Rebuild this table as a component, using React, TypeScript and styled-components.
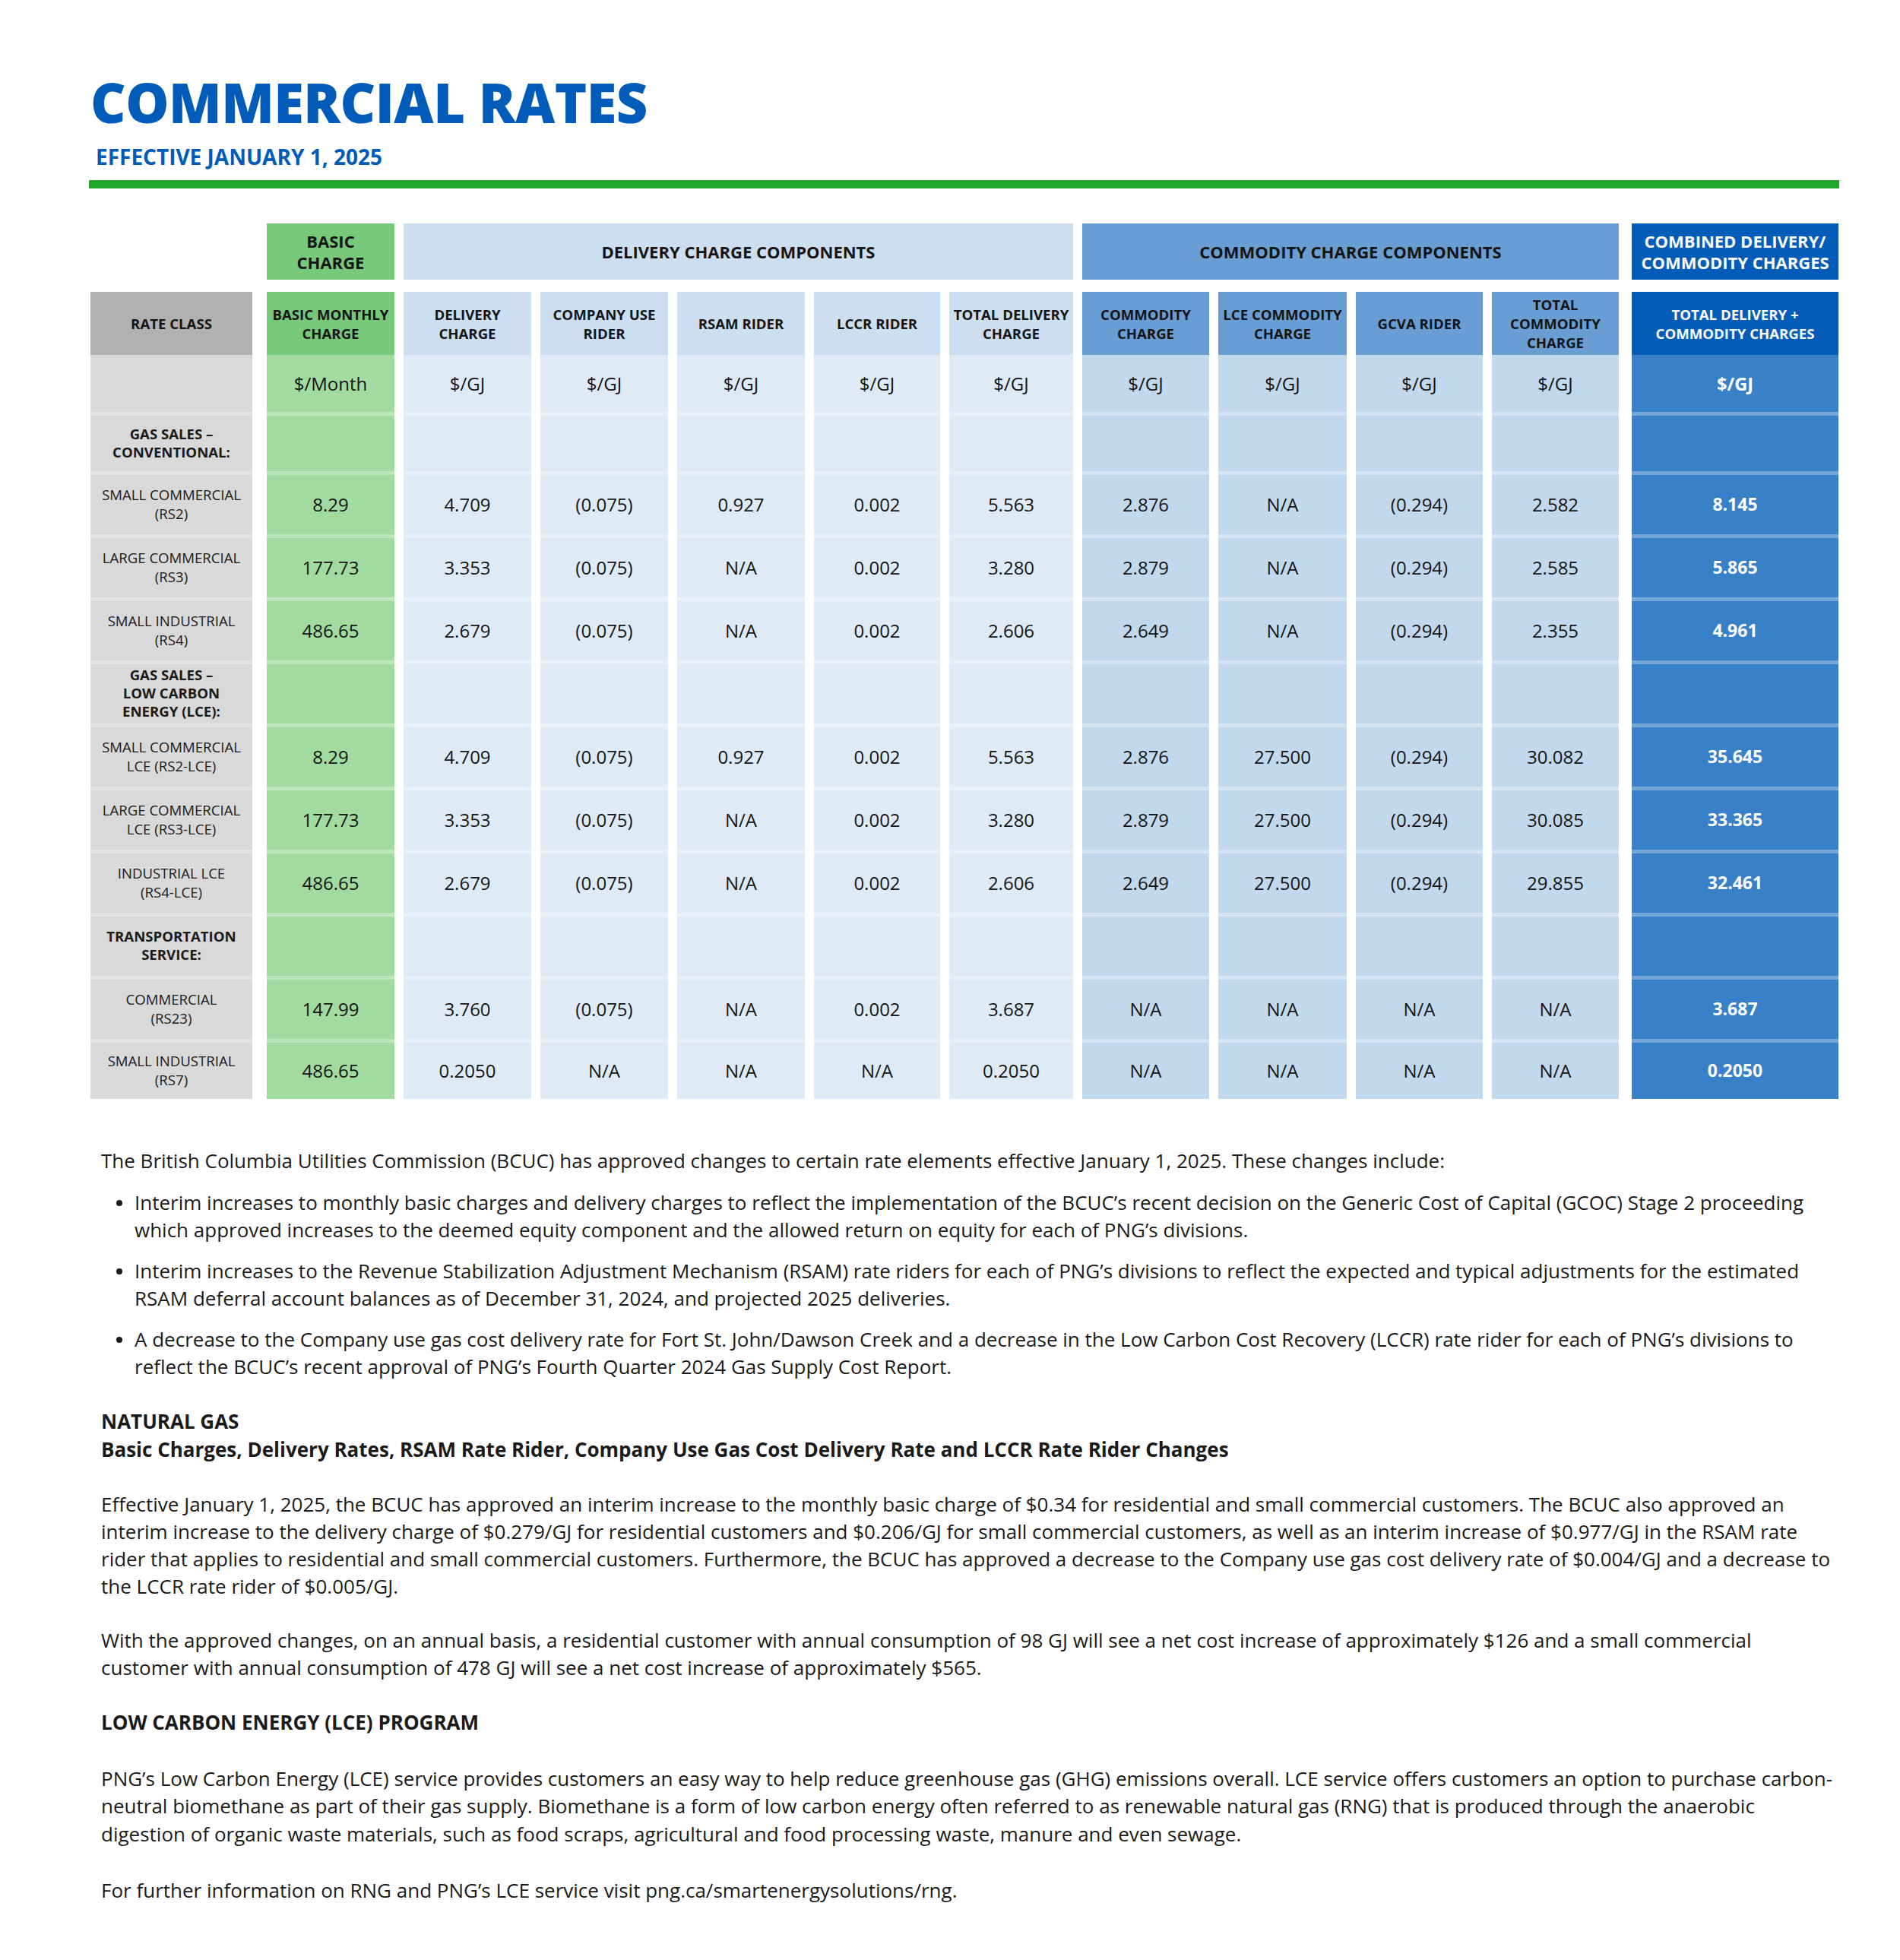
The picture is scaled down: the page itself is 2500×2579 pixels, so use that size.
import React from "react";
import styled, { createGlobalStyle, css } from "styled-components";

const GlobalStyle = createGlobalStyle`
  html, body { margin: 0; padding: 0; background: #ffffff; }
  body { font-family: "Open Sans", "Liberation Sans", Arial, sans-serif; color: #1a1a1a; }
  *, *::before, *::after { box-sizing: border-box; }
`;

type Tone = "gray" | "green" | "delivery" | "commodity" | "combined";

const palette: Record<Tone, { head: string; body: string; text: string }> = {
  gray: { head: "#b1b1b1", body: "#d9d9d9", text: "#141414" },
  green: { head: "#77c97a", body: "#a2db9f", text: "#141414" },
  delivery: { head: "#cbdff0", body: "#deebf7", text: "#141414" },
  commodity: { head: "#689ed3", body: "#c2d8ed", text: "#141414" },
  combined: { head: "#035db8", body: "#3880c8", text: "#ffffff" },
};

const COLUMNS =
  "220px 168px 168px 168px 168px 166px 163px 167px 169px 167px 167px 277px";

const Page = styled.div`
  width: 2500px;
  padding: 98px 80px 74px 117px;
`;

const Title = styled.h1`
  margin: 0;
  padding-left: 2px;
  font-size: 72px;
  line-height: 72px;
  font-weight: 800;
  color: #005cb8;
  letter-spacing: -0.5px;
`;

const Subtitle = styled.div`
  margin-top: 22px;
  padding-left: 9px;
  font-size: 28px;
  line-height: 28px;
  font-weight: 700;
  color: #005cb8;
`;

const Rule = styled.div`
  margin-top: 17px;
  height: 11px;
  background: #21a82a;
`;

const TableWrap = styled.div`
  margin-top: 46px;
  margin-left: 2px;
`;

const GroupRow = styled.div`
  display: grid;
  grid-template-columns: ${COLUMNS};
  column-gap: 12px;
  height: 74px;
`;

const GroupCell = styled.div<{ $tone: Tone; $span?: number }>`
  grid-column: span ${(p) => p.$span ?? 1};
  background: ${(p) => palette[p.$tone].head};
  color: ${(p) => palette[p.$tone].text};
  display: flex;
  align-items: center;
  justify-content: center;
  text-align: center;
  font-size: 22px;
  line-height: 28px;
  font-weight: 700;
  white-space: pre-line;
  ${(p) => p.$tone === "combined" && css`margin-left: 5px;`}
`;

const Blank = styled.div``;

const Grid = styled.div`
  margin-top: 16px;
  display: grid;
  grid-template-columns: ${COLUMNS};
  grid-template-rows: 83px 75px 78px repeat(9, 83px) 79px;
  column-gap: 12px;
`;

const toneEdges = (tone: Tone) => css`
  ${tone === "gray" && css`margin-right: 7px;`}
  ${tone === "combined" && css`margin-left: 5px;`}
`;

const HeadCell = styled.div<{ $tone: Tone }>`
  ${(p) => toneEdges(p.$tone)}
  background: ${(p) => palette[p.$tone].head};
  color: ${(p) => palette[p.$tone].text};
  display: flex;
  align-items: center;
  justify-content: center;
  text-align: center;
  font-size: 18.6px;
  line-height: 25px;
  font-weight: 700;
  white-space: pre-line;
  padding: 0 2px;
`;

const UnitCell = styled.div<{ $tone: Tone }>`
  ${(p) => toneEdges(p.$tone)}
  background: ${(p) => palette[p.$tone].body};
  color: ${(p) => palette[p.$tone].text};
  display: flex;
  align-items: center;
  justify-content: center;
  font-size: ${(p) => (p.$tone === "combined" ? "23.5px" : "24px")};
  font-weight: ${(p) => (p.$tone === "combined" ? 700 : 400)};
`;

const BodyCell = styled.div<{ $tone: Tone }>`
  ${(p) => toneEdges(p.$tone)}
  background: ${(p) => palette[p.$tone].body};
  color: ${(p) => palette[p.$tone].text};
  border-top: 5px solid rgba(255, 255, 255, 0.3);
  display: flex;
  align-items: center;
  justify-content: center;
  text-align: center;
  padding-bottom: 2px;
  font-size: ${(p) => (p.$tone === "combined" ? "23px" : "24px")};
  font-weight: ${(p) => (p.$tone === "combined" ? 700 : 400)};
`;

const RateLabel = styled.span<{ $section?: boolean }>`
  font-size: 18.6px;
  line-height: ${(p) => (p.$section ? "24px" : "25px")};
  font-weight: ${(p) => (p.$section ? 700 : 400)};
  white-space: pre-line;
  color: #1a1a1a;
`;

const Text = styled.div`
  margin-top: 63px;
  padding-left: 16px;
  font-size: 26px;
  line-height: 36.2px;
  color: #1a1a1a;
  white-space: nowrap;
`;

const Para = styled.p<{ $gap?: number }>`
  margin: ${(p) => p.$gap ?? 36}px 0 0;
`;

const Heading = styled.p<{ $gap?: number }>`
  margin: ${(p) => p.$gap ?? 36}px 0 0;
  font-weight: 700;
`;

const Bullets = styled.ul`
  list-style: none;
  margin: 19px 0 0;
  padding: 0;
`;

const Bullet = styled.li`
  position: relative;
  padding-left: 44px;
  & + & { margin-top: 17.5px; }
  &::before {
    content: "";
    position: absolute;
    left: 20px;
    top: 15px;
    width: 8px;
    height: 8px;
    border-radius: 50%;
    background: #1a1a1a;
  }
`;

const valueTones: Tone[] = [
  "green",
  "delivery",
  "delivery",
  "delivery",
  "delivery",
  "delivery",
  "commodity",
  "commodity",
  "commodity",
  "commodity",
  "combined",
];

const headers = [
  "BASIC MONTHLY\nCHARGE",
  "DELIVERY\nCHARGE",
  "COMPANY USE\nRIDER",
  "RSAM RIDER",
  "LCCR RIDER",
  "TOTAL DELIVERY\nCHARGE",
  "COMMODITY\nCHARGE",
  "LCE COMMODITY\nCHARGE",
  "GCVA RIDER",
  "TOTAL\nCOMMODITY\nCHARGE",
  "TOTAL DELIVERY +\nCOMMODITY CHARGES",
];

const units = ["$/Month", "$/GJ", "$/GJ", "$/GJ", "$/GJ", "$/GJ", "$/GJ", "$/GJ", "$/GJ", "$/GJ", "$/GJ"];

type Row = { label: string; section?: boolean; values?: string[] };

const rows: Row[] = [
  { label: "GAS SALES –\nCONVENTIONAL:", section: true },
  { label: "SMALL COMMERCIAL\n(RS2)", values: ["8.29", "4.709", "(0.075)", "0.927", "0.002", "5.563", "2.876", "N/A", "(0.294)", "2.582", "8.145"] },
  { label: "LARGE COMMERCIAL\n(RS3)", values: ["177.73", "3.353", "(0.075)", "N/A", "0.002", "3.280", "2.879", "N/A", "(0.294)", "2.585", "5.865"] },
  { label: "SMALL INDUSTRIAL\n(RS4)", values: ["486.65", "2.679", "(0.075)", "N/A", "0.002", "2.606", "2.649", "N/A", "(0.294)", "2.355", "4.961"] },
  { label: "GAS SALES –\nLOW CARBON\nENERGY (LCE):", section: true },
  { label: "SMALL COMMERCIAL\nLCE (RS2-LCE)", values: ["8.29", "4.709", "(0.075)", "0.927", "0.002", "5.563", "2.876", "27.500", "(0.294)", "30.082", "35.645"] },
  { label: "LARGE COMMERCIAL\nLCE (RS3-LCE)", values: ["177.73", "3.353", "(0.075)", "N/A", "0.002", "3.280", "2.879", "27.500", "(0.294)", "30.085", "33.365"] },
  { label: "INDUSTRIAL LCE\n(RS4-LCE)", values: ["486.65", "2.679", "(0.075)", "N/A", "0.002", "2.606", "2.649", "27.500", "(0.294)", "29.855", "32.461"] },
  { label: "TRANSPORTATION\nSERVICE:", section: true },
  { label: "COMMERCIAL\n(RS23)", values: ["147.99", "3.760", "(0.075)", "N/A", "0.002", "3.687", "N/A", "N/A", "N/A", "N/A", "3.687"] },
  { label: "SMALL INDUSTRIAL\n(RS7)", values: ["486.65", "0.2050", "N/A", "N/A", "N/A", "0.2050", "N/A", "N/A", "N/A", "N/A", "0.2050"] },
];

export default function App() {
  return (
    <>
      <GlobalStyle />
      <Page>
        <Title>COMMERCIAL RATES</Title>
        <Subtitle>EFFECTIVE JANUARY 1, 2025</Subtitle>
        <Rule />
        <TableWrap>
          <GroupRow>
            <Blank />
            <GroupCell $tone="green">{"BASIC\nCHARGE"}</GroupCell>
            <GroupCell $tone="delivery" $span={5}>DELIVERY CHARGE COMPONENTS</GroupCell>
            <GroupCell $tone="commodity" $span={4}>COMMODITY CHARGE COMPONENTS</GroupCell>
            <GroupCell $tone="combined">{"COMBINED DELIVERY/\nCOMMODITY CHARGES"}</GroupCell>
          </GroupRow>
          <Grid>
            <HeadCell $tone="gray">RATE CLASS</HeadCell>
            {headers.map((h, i) => (
              <HeadCell key={h} $tone={valueTones[i]}>{h}</HeadCell>
            ))}
            <UnitCell $tone="gray" />
            {units.map((u, i) => (
              <UnitCell key={i} $tone={valueTones[i]}>{u}</UnitCell>
            ))}
            {rows.map((r, ri) => (
              <React.Fragment key={ri}>
                <BodyCell $tone="gray">
                  <RateLabel $section={r.section}>{r.label}</RateLabel>
                </BodyCell>
                {valueTones.map((t, ci) => (
                  <BodyCell key={ci} $tone={t}>{r.values ? r.values[ci] : ""}</BodyCell>
                ))}
              </React.Fragment>
            ))}
          </Grid>
        </TableWrap>
        <Text>
          <Para $gap={0}>
            The British Columbia Utilities Commission (BCUC) has approved changes to certain rate elements effective January 1, 2025. These changes include:
          </Para>
          <Bullets>
            <Bullet>
              Interim increases to monthly basic charges and delivery charges to reflect the implementation of the BCUC’s recent decision on the Generic Cost of Capital (GCOC) Stage 2 proceeding
              <br />
              which approved increases to the deemed equity component and the allowed return on equity for each of PNG’s divisions.
            </Bullet>
            <Bullet>
              Interim increases to the Revenue Stabilization Adjustment Mechanism (RSAM) rate riders for each of PNG’s divisions to reflect the expected and typical adjustments for the estimated
              <br />
              RSAM deferral account balances as of December 31, 2024, and projected 2025 deliveries.
            </Bullet>
            <Bullet>
              A decrease to the Company use gas cost delivery rate for Fort St. John/Dawson Creek and a decrease in the Low Carbon Cost Recovery (LCCR) rate rider for each of PNG’s divisions to
              <br />
              reflect the BCUC’s recent approval of PNG’s Fourth Quarter 2024 Gas Supply Cost Report.
            </Bullet>
          </Bullets>
          <Heading>
            NATURAL GAS
            <br />
            Basic Charges, Delivery Rates, RSAM Rate Rider, Company Use Gas Cost Delivery Rate and LCCR Rate Rider Changes
          </Heading>
          <Para>
            Effective January 1, 2025, the BCUC has approved an interim increase to the monthly basic charge of $0.34 for residential and small commercial customers. The BCUC also approved an
            <br />
            interim increase to the delivery charge of $0.279/GJ for residential customers and $0.206/GJ for small commercial customers, as well as an interim increase of $0.977/GJ in the RSAM rate
            <br />
            rider that applies to residential and small commercial customers. Furthermore, the BCUC has approved a decrease to the Company use gas cost delivery rate of $0.004/GJ and a decrease to
            <br />
            the LCCR rate rider of $0.005/GJ.
          </Para>
          <Para $gap={34}>
            With the approved changes, on an annual basis, a residential customer with annual consumption of 98 GJ will see a net cost increase of approximately $126 and a small commercial
            <br />
            customer with annual consumption of 478 GJ will see a net cost increase of approximately $565.
          </Para>
          <Heading $gap={36}>LOW CARBON ENERGY (LCE) PROGRAM</Heading>
          <Para $gap={38}>
            PNG’s Low Carbon Energy (LCE) service provides customers an easy way to help reduce greenhouse gas (GHG) emissions overall. LCE service offers customers an option to purchase carbon-
            <br />
            neutral biomethane as part of their gas supply. Biomethane is a form of low carbon energy often referred to as renewable natural gas (RNG) that is produced through the anaerobic
            <br />
            digestion of organic waste materials, such as food scraps, agricultural and food processing waste, manure and even sewage.
          </Para>
          <Para $gap={38}>
            For further information on RNG and PNG’s LCE service visit png.ca/smartenergysolutions/rng.
          </Para>
        </Text>
      </Page>
    </>
  );
}
